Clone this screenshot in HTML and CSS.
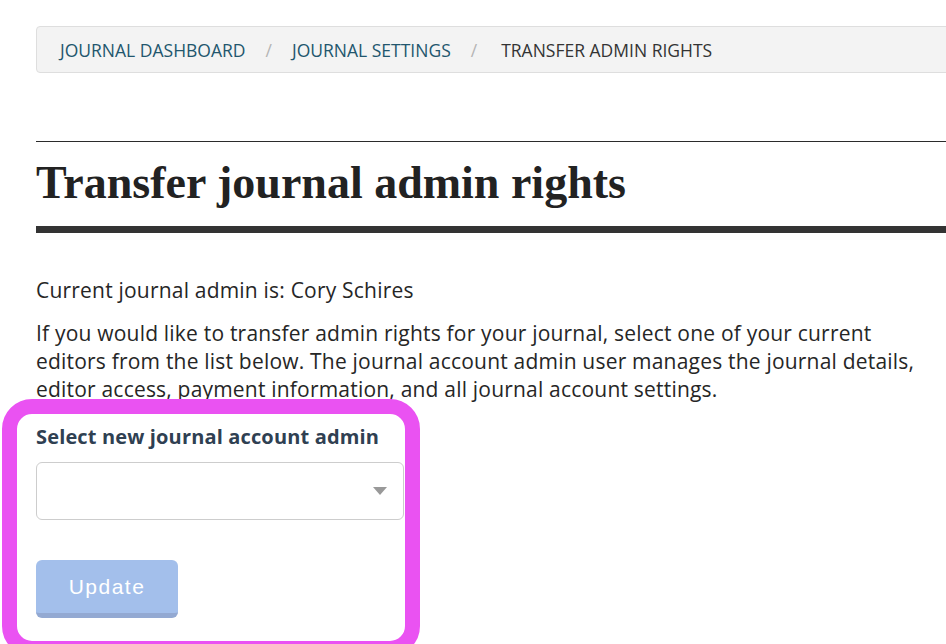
FILE: index.html
```html
<html lang="en">

<head>
    <meta charset="UTF-8">
    <meta name="viewport" content="width=device-width, initial-scale=1.0">
    <title>Transfer journal admin rights</title>
    <link rel="stylesheet" href="styles.css">
</head>

<body>
    <div class="page">
        <nav class="breadcrumb">
            <a href="#">Journal Dashboard</a>
            <span class="sep">/</span>
            <a href="#">Journal Settings</a>
            <span class="sep">/</span>
            <span class="current">Transfer Admin Rights</span>
        </nav>

        <div class="title-block">
            <h1 id="heading">Transfer journal admin rights</h1>
        </div>

        <p class="lead current-admin">Current journal admin is: Cory Schires</p>
        <p class="lead intro">If you would like to transfer admin rights for your journal, select one of your current
            editors from the list below. The journal account admin user manages the journal details,
            editor access, payment information, and all journal account settings.</p>

        <div class="highlight">
            <form class="admin-form">
                <label for="newAdmin">Select new journal account admin</label>
                <div class="select-wrap">
                    <select id="newAdmin">
                        <option value=""></option>
                    </select>
                    <span class="caret"></span>
                </div>
                <button type="submit" class="btn" disabled>Update</button>
            </form>
        </div>
    </div>
</body>

</html>
```

FILE: styles.css
```css
:root {
    --link: #22566d;
    --text: #262626;
    --label: #2f4052;
    --highlight: #ea52f2;
}

* {
    box-sizing: border-box;
}

html {
    overflow: hidden;
}

body {
    margin: 0;
    font-family: "Open Sans", Lato, sans-serif;
    color: var(--text);
    background: #fff;
}

.page {
    padding-left: 36px;
    padding-top: 26px;
    width: 956px;
}

.breadcrumb {
    display: flex;
    align-items: center;
    height: 47px;
    padding: 0 23px;
    background: #f3f3f3;
    border: 1px solid #dedede;
    border-radius: 4px;
    font-size: 17.5px;
    text-transform: uppercase;
}

.breadcrumb a {
    color: var(--link);
    text-decoration: none;
}

.breadcrumb .sep {
    color: #b5b5b5;
    margin: 0 20px;
}

.breadcrumb .current {
    color: #333;
    padding-left: 4px;
}

.title-block {
    margin-top: 68px;
    border-top: 1px solid #2b2b2b;
    border-bottom: 7px solid #333;
}

#heading {
    margin: 0;
    padding: 14px 0 16px;
    font-family: "Liberation Serif", serif;
    font-weight: bold;
    font-size: 46px;
    line-height: 54px;
    color: #222;
}

.lead {
    margin: 0;
    font-size: 21px;
    line-height: 28px;
    letter-spacing: 0.2px;
}

.current-admin {
    margin-top: 43px;
}

.intro {
    margin-top: 15px;
    width: 890px;
}

.highlight {
    position: relative;
    margin: -4px 0 0 -34px;
    width: 418px;
    border: 15px solid var(--highlight);
    border-radius: 30px;
    background: #fff;
}

.admin-form {
    display: flex;
    flex-direction: column;
    align-items: flex-start;
    padding: 11px 0 7px 19px;
}

label {
    font-weight: bold;
    font-size: 20px;
    line-height: 24px;
    letter-spacing: 0.15px;
    color: var(--label);
}

.select-wrap {
    position: relative;
    margin-top: 13px;
    width: 368px;
}

select {
    display: block;
    appearance: none;
    width: 100%;
    height: 58px;
    background: #fff;
    border: 1px solid #cdcdcd;
    border-radius: 6px;
}

.caret {
    position: absolute;
    right: 17px;
    top: 25px;
    border-left: 7.5px solid transparent;
    border-right: 7.5px solid transparent;
    border-top: 8px solid #999;
}

.btn {
    margin-top: 40px;
    width: 142px;
    height: 58px;
    background: #a3bfeb;
    border: 0;
    border-bottom: 5px solid #93a9d2;
    border-radius: 6px;
    color: #fff;
    font-family: "Liberation Sans", Arial, sans-serif;
    font-size: 21px;
    letter-spacing: 1.5px;
}
```
